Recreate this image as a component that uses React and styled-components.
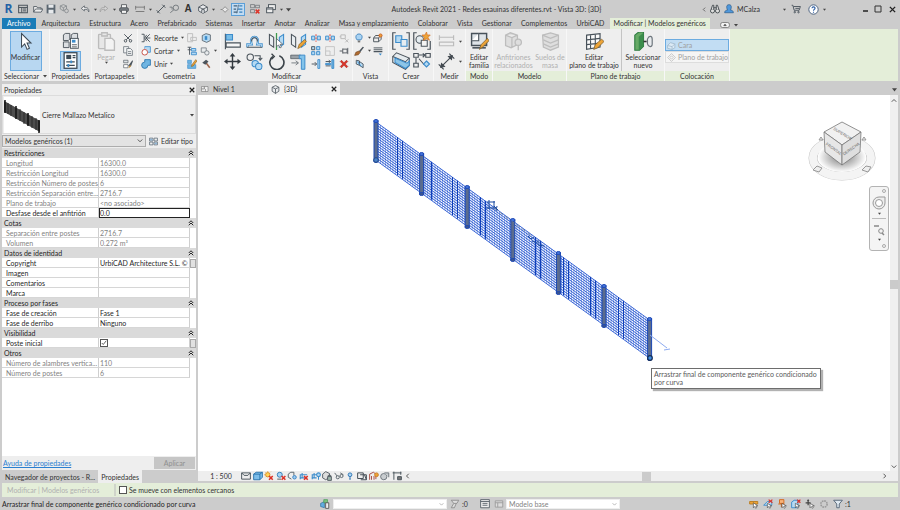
import React, { useState } from 'react';
import styled, { createGlobalStyle, css } from 'styled-components';

const c = {
  chrome: '#cccccc',
  ribbon: '#eeeeee',
  context: '#e4eed9',
  text: '#333333',
  muted: '#828282',
  disabled: '#b0b0b0',
  dark: '#4b545c',
  blue: '#3c8ccb',
  pale: '#b5daf3',
  orange: '#eda437',
  red: '#dc3328',
  green: '#3d9a4c',
};

/* ---------- icons ---------- */

const glyphs = {
  sheet: <g fill="none" stroke={c.dark} strokeWidth="1.600"><rect x="1" y="2" width="14" height="12" /><path d="M1 5.500h14M6 5.500v8.500M8 8h5M8 11h5" /></g>,
  open: <g fill="#eee" stroke={c.dark} strokeWidth="1.300"><path d="M1 13V4h5l1 2h6v3M1 13l3-5h12l-3 5z" /></g>,
  save: <g><path d="M1 1h14v14H1z" fill="#5b6670" /><path d="M4 1h8v5H4zM4 9h8v6H4z" fill="#e6e9ec" /></g>,
  sync: <g fill="none" stroke="#858a8e" strokeWidth="1.300"><path d="M7 1l5 2v5l-5 3-5-3V3zM2 3l5 3 5-3M7 6v5" /><circle cx="12" cy="11" r="3" fill="#ccc" /></g>,
  undo: <path d="M7 3L2 7l5 4V8.500c4-.5 6 .5 7 4 1-5-2-7-7-7z" fill="#f2f2f2" stroke={c.dark} strokeWidth="1.200" />,
  redo: <path d="M9 3l5 4-5 4V8.500c-4-.5-6 .5-7 4-1-5 2-7 7-7z" fill="#d5d5d5" stroke="#9a9a9a" strokeWidth="1.200" />,
  print: <g stroke="#4b4f54" strokeWidth="1.300" fill="#f4f4f4"><path d="M4 6V1h8v5" /><rect x="1" y="6" width="14" height="6" rx="2" fill="#777d82" /><path d="M4 10h8v5H4z" /></g>,
  ruler: <g stroke="#777" strokeWidth="1.500" fill="none"><path d="M1 3v6M15 3v6M1 5h14M1 12h14" /></g>,
  line: <g stroke={c.dark} strokeWidth="1.500" fill={c.dark}><path d="M2 14L14 2" /><path d="M1 10l5 5M10 1l5 5" /></g>,
  tag: <g fill="none" stroke="#6c7277" strokeWidth="1.400"><circle cx="11" cy="6" r="4.300" /><path d="M8 9l-6 5M1 5h4v4" /></g>,
  cube: <g fill="#e8eaec" stroke={c.dark} strokeWidth="1.400"><path d="M8 1l7 4v6l-7 4-7-4V5z" /><path d="M6 13V9h4v5M1 5l7 3 7-3" /></g>,
  diamond: <g fill="#e8e8e8" stroke="#777" strokeWidth="1.300"><path d="M9 3l5 5-5 5-5-5z" /><path d="M1 8h3" /></g>,
  thin: <g strokeWidth="2" stroke="#44617b"><path d="M1 3h6M1 8h4M1 13h6" /><path d="M10 3h5M8 8h7M10 13h5" stroke="#3781be" /><path d="M9 1L6 15" strokeWidth="1.200" /></g>,
  hidden: <g fill="none" stroke="#7b7f83" strokeWidth="1.400"><rect x="1" y="1" width="6" height="5" /><rect x="9" y="2" width="6" height="4" /><rect x="1" y="9" width="6" height="5" /><path d="M9 9l6 6M15 9l-6 6" stroke={c.red} strokeWidth="2.300" /></g>,
  switch: <g fill="#eee" stroke={c.dark} strokeWidth="1.500"><rect x="4" y="1" width="11" height="8" /><rect x="1" y="6" width="10" height="8" /><path d="M1 8h10" /></g>,
  binoc: <g fill="#ddd" stroke="#3d4348" strokeWidth="1.400"><circle cx="4" cy="11" r="3.300" /><circle cx="12" cy="11" r="3.300" /><path d="M2 8l2-6h2v6M14 8l-2-6h-2v6M6 6h4" /></g>,
  user: <path d="M8 1c3 0 4 2 3.600 5-.2 2-1 3-1.600 3.500 3 .5 5 1.500 5 4.500H1c0-3 2-4 5-4.500C5.400 9 4.600 8 4.400 6 4 3 5 1 8 1z" fill="#4f98dc" stroke="#24517f" />,
  cart: <g fill="none" stroke="#444e57" strokeWidth="1.400"><path d="M1 2h2l2 8h8l2-6H4M7 7h6" /><circle cx="6" cy="13" r="1.200" /><circle cx="12" cy="13" r="1.200" /></g>,
  help: <g><circle cx="8" cy="8" r="6.800" fill="#fff" stroke="#3f5878" strokeWidth="1.300" /><path d="M5.800 6.200C6 3.400 10.400 3.600 10.200 6.300 10 8 8 7.800 8 9.800M8 11.200v1.500" fill="none" stroke="#2d5fa5" strokeWidth="1.600" /></g>,
  play: <g fill="#f2f2f2" stroke="#555"><rect x="1" y="4" width="14" height="8" rx="3" /><path d="M6 9l2-2.500L10 9z" fill="#444" /></g>,

  cursor: <path d="M7 2v17l4-4 3 7 3-1.500-3-6.500h5z" fill="#fff" stroke="#3d4a55" strokeWidth="1.300" />,
  palettes: <g stroke={c.dark} strokeWidth="1.300"><path d="M2 4l3-2h6v8l-2 2H2zM13 4l3-2h6v8H13zM2 14h8v8H2z" fill="#dcdfe2" /><rect x="12" y="9" width="11" height="14" fill="#fff" /><path d="M14 11h5v4h-5z" fill={c.blue} stroke="none" /><path d="M14 18h7M14 21h7" /></g>,
  props: <g><rect x="3" y="1" width="18" height="22" fill="#fff" stroke="#3d4a55" strokeWidth="1.800" /><path d="M6 4h7v6H6z" fill="#3d4a55" /><path d="M15 5h4M15 8h4M6 14h12M6 19h12" stroke="#3d4a55" strokeWidth="1.800" /><path d="M13 12v4M9 17v4" stroke={c.blue} strokeWidth="2.500" /></g>,
  paste: <g fill="#e7e7e7" stroke="#bcbcbc" strokeWidth="1.700"><rect x="2" y="3" width="15" height="18" rx="1" /><path d="M6 1h7v4H6z" /><path d="M10 8h9l3 3v12H10z" fill="#f3f3f3" /></g>,
  cut: <g fill="none" stroke={c.dark} strokeWidth="1.500"><path d="M2 2l9 9M14 2l-9 9" /><circle cx="4" cy="12.500" r="2" /><circle cx="12" cy="12.500" r="2" /></g>,
  copy: <g fill="#f2f4f5" stroke="#6d757c" strokeWidth="1.300"><path d="M1 1h8v10H1z" /><path d="M6 4h6l3 3v8H6zM8 9h5M8 12h5" /></g>,
  match: <g><path d="M1 2h7v4H1z" fill="#dfe3e6" stroke={c.dark} /><path d="M1 9h7v5H1z" fill="#fff" stroke={c.dark} /><path d="M15 2l-6 8 1 4 3-3 3-8z" fill={c.dark} /><path d="M8 15l3-5 2 1z" fill={c.orange} /></g>,
  cope: <g fill="none" stroke={c.dark} strokeWidth="1.500"><path d="M1 2h4v12H1M14 2L8 8l6 6M8 8h7M9 3l-3 5 3 5" /></g>,
  cutGeo: <g><path d="M6 1h9v9h-4" fill={c.pale} stroke={c.blue} strokeWidth="1.300" /><path d="M6 1v4" stroke={c.blue} /><circle cx="6" cy="10" r="4.500" fill="#fff" stroke="#c44f44" strokeWidth="1.500" /></g>,
  join: <path d="M6 1h9v9h-4a5 5 0 1 1-5-5z" fill="#6fb5e2" stroke="#2a76ae" strokeWidth="1.400" />,
  wall: <g fill="#eee" stroke="#bbb" strokeWidth="1.400"><path d="M1 1h8v13H1zM6 7h9v5H6z" /></g>,
  split: <g><path d="M2 4l6-3 7 2v9l-6 3-7-3z" fill={c.pale} stroke={c.dark} strokeWidth="1.200" /><path d="M6 5h4v6H6z" fill={c.blue} /></g>,
  align2: <g stroke={c.dark} strokeWidth="1.400"><path d="M1 2h6M1 6h6M4 2v12" /><path d="M7 4h7v4H7zM7 10h8v4H7z" fill={c.pale} stroke={c.blue} /></g>,
  unjoin: <g fill="#e8ebed" stroke="#737b82" strokeWidth="1.300"><path d="M2 3h8v7H2z" /><circle cx="11" cy="11" r="3.500" /></g>,
  paint: <g><path d="M1 2h6v5H1zM1 9h13v6H1z" fill="#6fb5e2" stroke={c.blue} /><path d="M14 1l-6 8-1 3 3-1 6-8z" fill={c.orange} stroke="#8b6421" /></g>,
  hammer: <g><path d="M8 6l6 8" stroke="#a0684f" strokeWidth="2.500" /><path d="M2 6l6-5 4 3-5 5z" fill={c.dark} /></g>,

  alignBig: <g><path d="M2 1v22" stroke={c.dark} strokeWidth="1.600" /><path d="M3 2h9v8H3z" fill="#79bde6" stroke={c.blue} strokeWidth="1.500" /><path d="M3 14h20v6H3z" fill="#f5f5f5" stroke={c.dark} strokeWidth="1.600" /></g>,
  offset: <g><path d="M2 20v-4h6c-5-14 13-14 8 0h6v4" fill="none" stroke={c.blue} strokeWidth="3.200" /><path d="M2 20v-4h6c-5-14 13-14 8 0h6v4" fill="none" stroke={c.pale} strokeWidth="1.400" /><path d="M1 20h22M8 12c-1-7 9-7 8 0" fill="none" stroke={c.dark} strokeWidth="1.500" /></g>,
  mirror: <g><path d="M2 2l6 4v14l-6-4z" fill="#e8edf0" stroke={c.dark} strokeWidth="1.500" /><path d="M22 2l-6 4v14l6-4z" fill={c.pale} stroke={c.blue} strokeWidth="1.500" /><path d="M12 0v24" stroke={c.green} strokeWidth="1.800" /><path d="M12 8v11l3-2 2 4 2-1-2-4h4z" fill="#fff" stroke={c.dark} /></g>,
  mirrorDraw: <g><path d="M2 2l6 4v14l-6-4z" fill="#e8edf0" stroke={c.dark} strokeWidth="1.500" /><path d="M22 2l-6 4v14l6-4z" fill={c.pale} stroke={c.blue} strokeWidth="1.500" /><path d="M11 22l2-6 8-7 2 3-8 8z" fill={c.orange} stroke="#80612c" /></g>,
  move: <path d="M12 0l4 5h-3v6h6V8l5 4-5 4v-3h-6v6h3l-4 5-4-5h3v-6H5v3l-5-4 5-4v3h6V5H8z" fill="#343b41" />,
  copyBig: <g strokeWidth="1.500"><circle cx="6" cy="6" r="4.500" fill="#eee" stroke={c.dark} /><path d="M12 4h8v5M18 7l2 3 3-3" fill="none" stroke={c.dark} /><circle cx="13" cy="15" r="4.500" fill={c.pale} stroke={c.blue} /><circle cx="18" cy="19" r="4.500" fill={c.pale} stroke={c.blue} /></g>,
  rotate: <g fill="none" stroke="#3b4349" strokeWidth="2.300"><path d="M7 5a10 10 0 1 0 9-1" /><path d="M5 1l4 4-4 4" strokeWidth="1.800" /></g>,
  trim: <g><path d="M1 3h14v5H1z" fill="#9aa1a7" stroke={c.dark} /><path d="M13 3h8v20h-5V8h-3z" fill="#83c3ea" stroke={c.blue} strokeWidth="1.400" /><path d="M2 14h9M8 11l4 3-4 3" stroke={c.dark} fill="none" /></g>,
  splitEl: <g strokeWidth="1.500"><path d="M1 5h5v6H1zM10 5h5v6h-5z" fill={c.pale} stroke={c.blue} /><path d="M8 2v12" stroke={c.red} strokeDasharray="3 2" /></g>,
  unpin: <g fill="none" stroke="#b9b9b9" strokeWidth="1.500"><path d="M3 3h7v6H3zM1 6h2M10 10l5 5M15 10l-5 5" /></g>,
  array: <g fill={c.pale} stroke={c.blue} strokeWidth="1.500"><path d="M1 1h5v5H1z" stroke={c.dark} /><path d="M9 1h5v5H9zM1 9h5v5H1zM9 9h5v5H9z" /></g>,
  scale: <g fill="#eee" stroke="#c4c4c4" strokeWidth="1.500"><path d="M1 1h14v14H1z" /><path d="M1 8h7v7H1z" /></g>,
  pin: <g fill="none" stroke="#555c62" strokeWidth="1.500"><path d="M1 8h5M6 4v8M6 5h7v6H6M14 3v10" /></g>,
  trimOne: <g stroke={c.dark} fill="none" strokeWidth="1.500"><path d="M1 8h8M6 5l3 3-3 3" /><path d="M11 1h3v14h-3z" fill={c.pale} stroke={c.blue} /></g>,
  trimMulti: <g stroke={c.dark} fill="none" strokeWidth="1.500"><path d="M1 4h8M1 11h8M6 2l3 2-3 2" /><path d="M11 1h3v14h-3zM1 7h8v2H1z" fill="#6fb5e2" stroke={c.blue} /></g>,
  delete: <path d="M2 4l2-2 4 4 4-4 2 2-4 4 4 4-2 2-4-4-4 4-2-2 4-4z" fill={c.red} stroke="#a92820" />,
  bulb: <g><path d="M5 11C2 8 2 2 8 1.500 14 2 14 8 11 11z" fill="#a9d3f3" stroke="#3b7fb9" strokeWidth="1.400" /><path d="M6 12h4v3H6z" fill="#777" /></g>,
  brush: <g><path d="M14 1l-6 7 2 2 6-8z" fill={c.dark} /><path d="M8 8L3 10l-2 5 6-1 3-4z" fill="#b06b31" stroke="#744821" /></g>,
  override: <g fill="none" stroke={c.dark} strokeWidth="1.500"><path d="M1 8l3-4h8l-3 4zM1 8v6h8V8M9 14l4-4V5" /><circle cx="12" cy="4" r="2.500" fill={c.orange} stroke="#cc6127" /></g>,
  linework: <g stroke="#4b545c"><path d="M1 3h14M1 6h14" strokeWidth="1.500" /><path d="M1 9h14" strokeWidth="2" /><path d="M9 12h5l-2 3z" fill={c.blue} stroke="none" /></g>,
  section: <g fill={c.pale} stroke={c.dark} strokeWidth="1.400"><path d="M2 2l5 1v7L2 8zM7 4l6 4v6l-6-4z" /><path d="M4 4l6 8" stroke={c.blue} /></g>,
  group: <g><path d="M5 1H1v22h4M19 1h4v22h-4" fill="none" stroke={c.dark} strokeWidth="1.600" /><path d="M5 5h8v9H5z" fill={c.pale} stroke={c.blue} strokeWidth="1.500" /><path d="M12 10h8v9h-8z" fill="#e6edf1" stroke={c.blue} strokeWidth="1.500" /></g>,
  similar: <g><path d="M5 1H1v22h4M19 23h4V12" fill="none" stroke={c.dark} strokeWidth="1.600" /><circle cx="9" cy="10" r="5" fill="#e6edf1" stroke={c.dark} strokeWidth="1.400" /><path d="M11 11h8v8h-8z" fill="#f4f4f4" stroke={c.dark} strokeWidth="1.400" /><path d="M18 0l1 4 4 0-3 3 2 4-4-2-4 2 1-4-3-3 4 0z" fill={c.orange} stroke="#d8772b" /></g>,
  assembly: <g strokeWidth="1.400" stroke={c.dark}><path d="M1 6l5-5 17 7v10l-5 5L1 14z" fill="#e5eaed" /><path d="M1 6l17 7v10M18 13l5-5" fill="none" /><path d="M4 8l16 7 3-3v6l-5 4L4 14z" fill="#8ec5e7" stroke={c.blue} /></g>,
  parts: <g fill="none" stroke={c.dark} strokeWidth="1.500"><path d="M1 2h6v5H1zM17 2h6v5h-6zM1 15h6v5H1z" /><path d="M8 4h8M4 8v7M8 9l7 8M13 2l3 2-3 3" /><path d="M18 12l4 4-4 4-4-4z" fill={c.pale} stroke={c.blue} /></g>,
  dimGrey: <g fill="none" stroke="#bcbcbc" strokeWidth="1.700"><path d="M2 3v7M22 3v7M2 6h20M2 13h20v5H2z" /></g>,
  measure: <g stroke="#424950" strokeWidth="1.600" fill="#424950"><path d="M4 20L20 4" /><path d="M1 16l7 7M16 1l7 7" /><path d="M4 20l1-5 4 4zM20 4l-1 5-4-4z" /></g>,
  family: <g><path d="M2 2h19v15H2z" fill="#dfe4e8" stroke="#48525a" strokeWidth="1.800" /><path d="M2 11h9V2" fill="#fff" stroke="#48525a" strokeWidth="1.400" /><path d="M3 20h17" stroke="#48525a" strokeWidth="2" /><path d="M12 22l2-6 8-8 2 3-8 8z" fill={c.orange} stroke="#80612c" /></g>,
  hosts: <g fill="#dedede" stroke="#bdbdbd" strokeWidth="1.600"><path d="M2 4l6-3 9 3v12l-8 4-7-3zM2 4l8 3 7-3M10 7v12" /><circle cx="18" cy="13" r="4" /><path d="M18 17v6" /></g>,
  floors: <g fill="#dedede" stroke="#bdbdbd" strokeWidth="1.600"><path d="M2 4l10-3 10 3v15l-10 4-9-4z" /><path d="M2 4l10 4 10-4M3 10l9 4 10-4M3 15l9 4 10-4" fill="none" /></g>,
  plane: <g><path d="M2 4l17-2v17L2 22z" fill="#fafafa" stroke="#48525a" strokeWidth="1.500" /><path d="M7 4v17M13 3v17M2 10l17-2M2 16l17-2" stroke="#48525a" strokeWidth="1.400" /><path d="M11 22l2-6 8-7 3 3-8 8z" fill={c.orange} stroke="#80612c" /></g>,
  pick: <g><path d="M1 4l5-4h6v18l-5 5H1z" fill="#66aa66" stroke="#2f7c42" strokeWidth="1.400" /><path d="M6 6L12 1v17l-6 5z" fill="#3c8d4c" /><path d="M12 12h4" stroke="#333" strokeWidth="2" /><path d="M17 9c2-5 6-4 6 0v6c0 5-5 4-6 0z" fill="#e8ebed" stroke="#6d757c" strokeWidth="1.500" /></g>,
  face: <g fill="#dceaf5" stroke="#9fb7cb" strokeWidth="1.400"><path d="M1 8l5-5 8 2v7l-5 3-8-2z" /><path d="M1 8l8 2 5-5M9 10v5" /></g>,
  workplane: <g fill="none" stroke="#c2c2c2" strokeWidth="1.500"><path d="M8 1l7 7-7 7-7-7z" /><path d="M8 5l3 3-3 3-3-3z" /></g>,
  typeEdit: <g fill="none" stroke="#5e6c79" strokeWidth="1.400"><path d="M1 2h6v5H1zM1 9h6v5H1zM9 2h6v5H9zM9 9h6v5H9z" /><path d="M2 3h4v3H2zM10 10h4v3h-4z" fill="#8cb4d6" stroke="none" /></g>,
  plan: <g fill="#eee" stroke="#777" strokeWidth="1.200"><path d="M1 3h13v10H1zM1 8h6V3M9 13V8" /></g>,
  view3d: <g fill="#e8eaec" stroke={c.dark} strokeWidth="1.400"><path d="M8 1l6 3v7l-6 4-6-4V4z" /><path d="M2 4l6 3 6-3M8 7v8" /></g>,

  detail: <g fill="none" stroke="#48525a" strokeWidth="1.500"><path d="M1 3h14v10H1zM1 3l4 4h6l4-4" /></g>,
  visual: <path d="M1 5l4-3h10v8l-4 4H1zM1 5h10v9M11 5l4-3" fill="#7cbde9" stroke="#236ea8" strokeWidth="1.400" />,
  sun: <g><circle cx="6" cy="6" r="3.500" fill="#ffd45c" stroke="#dc8f22" strokeWidth="1.500" /><path d="M6 0v2M0 6h2M2 2l1 1M10 2l1-1M2 10l1-1" stroke="#dc8f22" /><path d="M8 8l6 6M14 8l-6 6" stroke={c.red} strokeWidth="2.500" /></g>,
  shadow: <g><circle cx="6" cy="6" r="4" fill="#a9d3f3" stroke="#317fb9" strokeWidth="1.500" /><path d="M2 13h6" stroke="#555" strokeWidth="1.500" /><path d="M9 8l6 6M15 8l-6 6" stroke={c.red} strokeWidth="2.500" /></g>,
  render: <g fill="none" stroke="#59636b" strokeWidth="1.500"><path d="M2 5l4-3h5v5M2 5v5l5 3" /><circle cx="12" cy="10" r="2.800" fill="#9ccaf0" stroke="#3a83c2" /></g>,
  crop: <g strokeWidth="1.700" fill="none"><path d="M2 13V6h11M5 3v8M1 11h9" stroke={c.blue} /><path d="M8 8l6 6M14 8l-6 6" stroke={c.red} strokeWidth="2.500" /></g>,
  cropShow: <g strokeWidth="1.700" fill="none" stroke={c.blue}><path d="M2 13V6h8M5 3v8M1 11h8" /><circle cx="12" cy="6" r="3" fill="#b5daf3" /><path d="M12 9v5" /></g>,
  lock: <g fill="#ddd" stroke="#4b545c" strokeWidth="1.400"><path d="M1 5l5-4 6 3v6l-6 4-5-3z" /><path d="M9 9h6v6H9zM10 9V7h4v2" fill="#9fb7ac" /></g>,
  glasses: <g fill="none" stroke="#59636b" strokeWidth="1.500"><path d="M1 3l4 5M10 3l5 3" /><circle cx="6" cy="10" r="2.500" /><circle cx="12" cy="8" r="2.500" /></g>,
  bulbSm: <g><circle cx="8" cy="6" r="3" fill="#a9d3f3" stroke="#2e74b3" strokeWidth="1.500" /><path d="M8 10v4" stroke="#2e74b3" strokeWidth="2" /></g>,
  temp: <g fill="none" stroke="#48525a" strokeWidth="1.600"><path d="M1 3h9v9H1zM5 6h10v8H6M12 6l3 8" /></g>,
  analytic: <g fill="none" stroke="#59636b" strokeWidth="1.500"><path d="M1 14V5l6-3 4 3v8M4 8v6M8 8v6" stroke="#a7483d" /><circle cx="12" cy="6" r="3" fill={c.orange} stroke="#cc7d27" /></g>,
  displace: <g fill="#c9cdd0" stroke="#6d757c" strokeWidth="1.500"><circle cx="6" cy="9" r="5" /><path d="M7 3h7v7" /></g>,
  constr: <g fill="none" stroke="#48525a" strokeWidth="1.500"><path d="M1 3h14M3 1v13M14 1v5" /><path d="M9 9h6v5H9z" fill="#777" /></g>,

  worksets: <g><path d="M1 7l6-3v10l-6-2z" fill="#63aee0" stroke="#25669a" /><path d="M6 1h6v5H6z" fill="#7dc081" stroke={c.green} /><path d="M9 6h5v9H9z" fill="#eee" stroke="#555" strokeWidth="1.400" /></g>,
  filterOff: <g fill="#ddd" stroke="#8b8b8b" strokeWidth="1.400"><path d="M2 2h12l-3 5H6zM6 7l-4 7h5l3-7" /></g>,
  options: <g fill="#eee" stroke="#555e66" strokeWidth="1.400"><path d="M1 1h14v13H1zM1 4h14M4 7h8M4 10h8" /></g>,
  optionsOff: <g fill="#ddd" stroke="#999" strokeWidth="1.400"><path d="M2 3h12v10H2zM2 6h12M6 6v7" /></g>,
  selLink: <g><path d="M1 4h13v4H1z" fill={c.orange} stroke="#b87a1e" strokeWidth="1.400" /><path d="M7 6v8l2-2 2 3 1-1-1-3h3z" fill="#fff" stroke="#444" /></g>,
  selUnder: <g><path d="M1 10l6-6h7v6z" fill={c.pale} stroke={c.blue} strokeWidth="1.400" /><path d="M9 1l6 5M15 1L9 6" stroke={c.red} strokeWidth="2" /><path d="M7 7v7l2-2 2 3 1-1-1-3h3z" fill="#fff" stroke="#444" /></g>,
  selPin: <g><path d="M4 1h7v6H4zM2 8h10M7 8v5" fill="#f7b37a" stroke="#d2691e" strokeWidth="1.500" /><path d="M8 7v7l2-2 2 3 1-1-1-3h3z" fill="#fff" stroke="#444" /></g>,
  selFace: <g><path d="M1 5l4-3h6v12H1z" fill={c.pale} stroke={c.blue} strokeWidth="1.500" /><path d="M10 1l5 5M15 1l-5 5" stroke={c.red} strokeWidth="2" /><path d="M7 7v7l2-2 2 3 1-1-1-3h3z" fill="#fff" stroke="#444" /></g>,
  selDrag: <g><path d="M5 0l2 3H6v2h3v2H6v3H4V7H1V5h3V3H3z" fill="#444" /><path d="M8 7v7l2-2 2 3 1-1-1-3h3z" fill="#fff" stroke="#444" /></g>,
  gear: <circle cx="8" cy="8" r="5" fill="none" stroke="#999" strokeWidth="2.500" strokeDasharray="2.600 1.300" />,
  funnel: <path d="M1 2h14l-5 6v6H6V8z" fill="#dfe9f1" stroke="#566879" strokeWidth="1.500" />,
};

const big = ['cursor', 'palettes', 'props', 'paste', 'alignBig', 'offset', 'mirror', 'mirrorDraw', 'move', 'copyBig', 'rotate', 'trim', 'group', 'similar', 'assembly', 'parts', 'dimGrey', 'measure', 'family', 'hosts', 'floors', 'plane', 'pick'];

const Svg = styled.svg`
  display: block;
  flex: none;
`;

const Icon = ({ name, size = 10 }) => {
  const box = big.includes(name) ? 24 : 16;
  return (
    <Svg width={size} height={size} viewBox={`0 0 ${box} ${box}`} aria-hidden="true">
      {glyphs[name]}
    </Svg>
  );
};

const Caret = ({ size = 4 }) => (
  <Svg width={size} height={size} viewBox="0 0 8 8" aria-hidden="true">
    <path d="M0 2h8L4 7z" fill="#444" />
  </Svg>
);

const Chevron = ({ dir = 'down', color = '#555', size = 6 }) => {
  const d = { down: 'M1 2l3 3 3-3', up: 'M1 5l3-3 3 3', left: 'M5 1L2 4l3 3', right: 'M2 1l3 3-3 3', double: 'M1 4l3-3 3 3M1 7l3-3 3 3' }[dir];
  return (
    <Svg width={size} height={size} viewBox="0 0 8 8" aria-hidden="true">
      <path d={d} fill="none" stroke={color} strokeWidth="1.300" />
    </Svg>
  );
};

const Cross = ({ size = 6 }) => (
  <Svg width={size} height={size} viewBox="0 0 8 8" aria-hidden="true">
    <path d="M1 1l6 6M7 1L1 7" stroke="#222" strokeWidth="1.600" />
  </Svg>
);

/* ---------- shared ---------- */

const GlobalStyle = createGlobalStyle`
  * { box-sizing: border-box; }
  body {
    margin: 0;
    color: ${c.text};
    background: ${c.chrome};
    font: 7px/8px Lato, "Open Sans", sans-serif;
  }
  button, input, select {
    margin: 0;
    padding: 0;
    border: 0;
    border-radius: 0;
    color: inherit;
    background: none;
    font: inherit;
  }
`;

const Page = styled.div`
  display: flex;
  flex-direction: column;
  min-height: 100vh;
  overflow: hidden;
`;

const Row = styled.div`
  display: flex;
  align-items: center;
  gap: ${(p) => p.$gap || 0}px;
`;

const Spacer = styled.div`
  flex: 1;
`;

/* ---------- title bar ---------- */

const TitleBar = styled.header`
  display: flex;
  align-items: center;
  height: 18px;
  padding: 0 2px;
`;

const ToolButton = styled.button`
  display: flex;
  align-items: center;
  justify-content: ${(p) => (p.$end ? 'flex-end' : 'center')};
  gap: 4px;
  width: ${(p) => p.$w || 14}px;
  height: 13px;
  ${(p) => p.$on && css`
    background: #c3dcf2;
    outline: 1px solid #5b9fd8;
    outline-offset: -1px;
  `}
`;

const Logo = styled.span`
  width: 13px;
  color: #2462a6;
  font: bold 12px/12px "Open Sans", sans-serif;
  text-align: center;
`;

const Letter = styled.span`
  font: bold 10px/12px "Liberation Sans", sans-serif;
`;

const WindowTitle = styled.h1`
  flex: 1;
  margin: 0;
  font-size: 7px;
  font-weight: 400;
  text-align: center;
  white-space: nowrap;
`;

const User = styled.button`
  display: flex;
  align-items: center;
  gap: 3px;
  width: 62px;
  margin-left: 2px;
  svg:last-child { margin-left: auto; }
`;

/* ---------- ribbon ---------- */

const Tabs = styled.nav`
  display: flex;
  align-items: stretch;
  height: 11px;
  padding-left: 2px;
`;

const TabList = styled.div`
  display: flex;
  flex: 0 0 563px;
  justify-content: space-between;
  margin: 0 5px 0 6px;
`;

const Tab = styled.button`
  line-height: 11px;
  white-space: nowrap;
  ${(p) => p.$file && css`
    padding: 0 5px;
    background: #1b7cb7;
    color: #fff;
  `}
  ${(p) => p.$context && css`
    padding: 0 4px;
    background: ${c.context};
  `}
`;

const Ribbon = styled.div`
  display: flex;
  gap: 1px;
  height: 54px;
  margin: 0 2px;
  padding-bottom: 2px;
  background: linear-gradient(#f7f7f7 0 52px, ${c.chrome} 52px);
`;

const Panel = styled.section`
  display: flex;
  flex-direction: column;
  flex: 0 0 ${(p) => p.$w}px;
  min-width: 0;
  background: ${c.ribbon};
`;

const PanelBody = styled.div`
  display: flex;
  height: 42px;
  align-items: stretch;
  justify-content: ${(p) => (p.$start ? 'flex-start' : 'center')};
  gap: ${(p) => p.$gap || 0}px;
  padding: 2px 0 0;
`;

const PanelName = styled.h2`
  display: flex;
  align-items: center;
  justify-content: center;
  gap: 4px;
  margin: 0;
  height: 10px;
  font-size: 7px;
  font-weight: 400;
  white-space: nowrap;
  background: ${(p) => (p.$context ? c.context : 'none')};
`;

const BigButton = styled.button`
  display: flex;
  flex-direction: column;
  align-items: center;
  width: ${(p) => p.$w || 32}px;
  padding-top: 1px;
  white-space: nowrap;
  color: ${(p) => (p.$off ? c.disabled : c.text)};
  ${(p) => p.$on && css`
    background: #b8d7f1;
    outline: 1px solid #6cabe0;
    outline-offset: -1px;
  `}
  svg { margin-bottom: 2px; }
`;

const Stack = styled.div`
  display: flex;
  flex-direction: column;
`;

const SmallGrid = styled.div`
  display: grid;
  grid-template-columns: repeat(${(p) => p.$cols || 1}, ${(p) => p.$w || 14}px);
  grid-template-rows: repeat(3, 13px);
  align-items: center;
`;

const BigGrid = styled.div`
  display: grid;
  grid-template-columns: repeat(${(p) => p.$cols}, ${(p) => p.$w || 22}px);
  grid-template-rows: repeat(2, 20px);
  align-items: center;
  justify-items: center;
`;

const TextTool = styled.button`
  display: flex;
  align-items: center;
  gap: 3px;
  white-space: nowrap;
`;

const Divider = styled.div`
  width: 1px;
  margin-top: -2px;
  background: #c4c4c4;
`;

const PlacementList = styled.div`
  display: flex;
  flex-direction: column;
  padding-top: 8px;
`;

const Placement = styled.button`
  display: flex;
  align-items: center;
  gap: 2px;
  width: 64px;
  height: 12px;
  padding: 0 1px;
  color: #a0a0a0;
  white-space: nowrap;
  background: ${(p) => (p.$on ? '#c2ddf3' : '#f5f5f5')};
  border: 1px solid ${(p) => (p.$on ? '#6cabe0' : '#dddddd')};
`;

const ContextFill = styled.div`
  flex: 1;
  background: ${c.context};
`;

/* ---------- properties palette ---------- */

const Workspace = styled.main`
  display: flex;
  flex: 1;
`;

const Palette = styled.aside`
  display: flex;
  flex-direction: column;
  flex: 0 0 198px;
  padding: 1px 2px 0;
  background: ${c.chrome};
`;

const PaletteBox = styled.div`
  display: flex;
  flex-direction: column;
  flex: 1;
  background: ${c.ribbon};
`;

const PaletteHead = styled(Row)`
  justify-content: space-between;
  height: 11px;
  padding: 0 1px 0 2px;
`;

const TypePicker = styled.button`
  display: flex;
  align-items: center;
  gap: 2px;
  width: 100%;
  height: 39px;
  padding: 0 1px;
  border: 1px solid #dcdcdc;
  text-align: left;
`;

const Thumb = styled.svg`
  width: 36px;
  height: 36px;
  background: #fff;
`;

const FilterRow = styled(Row)`
  height: 14px;
  gap: 3px;
`;

const SelectBox = styled.div`
  position: relative;
  flex: 0 0 ${(p) => p.$w}px;
  height: ${(p) => p.$h || 12}px;
  border: 1px solid ${(p) => (p.$plain ? '#eeeeee' : '#adadad')};
  background: ${(p) => (p.$plain ? '#fff' : '#e3e3e3')};
  color: ${(p) => (p.$plain ? c.muted : c.text)};
  select {
    display: block;
    width: 100%;
    height: 100%;
    padding-left: 2px;
    appearance: none;
    line-height: 8px;
  }
  svg {
    position: absolute;
    right: 2px;
    top: 2px;
    pointer-events: none;
  }
`;

const TableArea = styled.div`
  flex: 1;
  background: #fff;
`;

const Table = styled.table`
  width: 100%;
  table-layout: fixed;
  border-collapse: separate;
  border-spacing: 0;
`;

const Col = styled.col`
  width: ${(p) => p.$w || 'auto'};
`;

const Group = styled.th`
  height: 10px;
  padding: 0 2px;
  text-align: left;
  font-weight: 400;
  line-height: 8px;
  background: #dadada;
  color: #1f1f1f;
  div { justify-content: space-between; }
  button { display: flex; }
`;

const Cell = styled.td`
  height: 10px;
  padding: 0 0 0 ${(p) => (p.$name ? 4 : 1)}px;
  white-space: nowrap;
  line-height: 8px;
  border-right: 1px solid #cfcfcf;
  border-bottom: 1px solid #d6d6d6;
  color: ${(p) => (p.$muted ? c.muted : '#1f1f1f')};
  ${(p) => p.$edit && css`
    border: 1px solid #222;
    padding: 0;
  `}
  input[type='text'] {
    display: block;
    width: 100%;
    height: 8px;
    outline: 0;
  }
  input[type='checkbox'] {
    display: block;
  }
`;

const MoreCell = styled.td`
  padding: 0;
`;

const MoreButton = styled.button`
  display: block;
  width: 6px;
  height: 9px;
  background: #e1e1e1;
  border: 1px solid #a9a9a9;
`;

const Tick = styled.input`
  appearance: none;
  width: 8px;
  height: 8px;
  border: 1px solid #555;
  background: #fff;
  &:checked {
    background: #fff url("data:image/svg+xml,%3Csvg xmlns='http://www.w3.org/2000/svg' viewBox='0 0 8 8'%3E%3Cpath d='M1 4l2 2 4-5' fill='none' stroke='%23333'/%3E%3C/svg%3E");
  }
`;

const HelpRow = styled(Row)`
  justify-content: space-between;
  height: 14px;
  padding: 0 1px;
  a { color: #2a7fd0; }
`;

const Apply = styled.button`
  width: 41px;
  height: 12px;
  background: #c6c6c6;
  color: #8f8f8f;
`;

const BottomTabs = styled.div`
  display: flex;
  height: 13px;
`;

const BottomTab = styled.button`
  padding: 0 3px;
  white-space: nowrap;
  background: ${(p) => (p.$on ? c.ribbon : 'none')};
`;

/* ---------- view area ---------- */

const ViewArea = styled.div`
  display: flex;
  flex-direction: column;
  flex: 1;
  min-width: 0;
  padding-right: 2px;
`;

const ViewTabs = styled.div`
  display: flex;
  align-items: center;
  height: 12px;
  padding-right: 1px;
`;

const ViewTab = styled.div`
  display: flex;
  align-items: center;
  gap: 4px;
  width: ${(p) => p.$w}px;
  height: 12px;
  padding: 0 3px;
  background: ${(p) => (p.$on ? '#f2f2f2' : 'none')};
`;

const CanvasRow = styled.div`
  display: flex;
  flex: 1;
`;

const Canvas = styled.div`
  position: relative;
  flex: 1;
  background: #fff;
  overflow: hidden;
`;

const Model = styled.svg`
  position: absolute;
  left: 0;
  top: 0;
`;

const Cube = styled.svg`
  position: absolute;
  right: 13px;
  top: 24px;
`;

const NavBar = styled.div`
  position: absolute;
  right: 1px;
  top: 91px;
  display: flex;
  flex-direction: column;
  align-items: center;
  justify-content: space-between;
  width: 20px;
  height: 65px;
  padding: 2px 0;
  border: 1px solid #b3b3b3;
  border-radius: 3px;
  background: #f4f4f4;
`;

const NavDot = styled.button`
  align-self: flex-end;
  width: 4px;
  height: 4px;
  margin-right: 2px;
  border: 1px solid #aaa;
  border-radius: 2px;
`;

const NavLine = styled.div`
  width: 14px;
  height: 1px;
  background: #bbb;
`;

const Tooltip = styled.div`
  position: absolute;
  left: 453px;
  top: 273px;
  width: 170px;
  padding: 1px 2px 2px;
  border: 1px solid #6d6d6d;
  background: #fff;
  box-shadow: 2px 2px 1px rgba(0, 0, 0, 0.3);
  color: #5a5a5a;
`;

const VScroll = styled.div`
  display: flex;
  flex-direction: column;
  align-items: center;
  justify-content: space-between;
  width: 8px;
  padding: 3px 0 1px;
  background: #f0f0f0;
`;

const Thumbnail = styled.div`
  width: ${(p) => p.$w}px;
  height: 9px;
  background: #cbcbcb;
`;

const ViewBar = styled.div`
  display: flex;
  align-items: center;
  height: 10px;
  margin-bottom: 2px;
  background: #eeeeee;
`;

const ScaleButton = styled.button`
  width: 43px;
  padding-left: 3px;
  text-align: center;
`;

const ViewTools = styled.div`
  display: flex;
  flex: 0 0 161px;
  justify-content: space-between;
  margin-right: 3px;
  button { display: flex; }
`;

const HScroll = styled.div`
  display: flex;
  flex: 1;
  align-items: center;
  justify-content: space-between;
  padding-right: 10px;
`;

/* ---------- bottom bars ---------- */

const OptionsBar = styled.div`
  display: flex;
  align-items: center;
  height: 14px;
  margin: 0 2px;
  padding-left: 5px;
  background: ${c.context};
`;

const OptionsName = styled.span`
  width: 107px;
  color: ${c.disabled};
`;

const Grip = styled.div`
  width: 2px;
  height: 12px;
  margin-right: 3px;
  background: #cfd4ca;
`;

const StatusBar = styled.footer`
  display: flex;
  align-items: center;
  height: 13px;
  padding: 0 2px;
`;

const StatusText = styled.span`
  flex: 0 1 315px;
  color: #1f1f1f;
`;

const Count = styled.span`
  width: ${(p) => p.$w}px;
`;

/* ---------- data ---------- */

const quickTools = [
  ['sheet', 15], ['open', 15], ['save', 12], ['sync', 21, true], ['undo', 20, true], ['redo', 19, true],
  ['print', 14], ['ruler', 24, true], ['line', 12], ['tag', 14],
];

const ribbonTabs = ['Arquitectura', 'Estructura', 'Acero', 'Prefabricado', 'Sistemas', 'Insertar', 'Anotar', 'Analizar', 'Masa y emplazamiento', 'Colaborar', 'Vista', 'Gestionar', 'Complementos', 'UrbiCAD'];

const properties = [
  { group: 'Restricciones', rows: [
    ['Longitud', '16300.0', true],
    ['Restricción Longitud', '16300.0', true],
    ['Restricción Número de postes', '6', true],
    ['Restricción Separación entre...', '2716.7', true],
    ['Plano de trabajo', '<no asociado>', true],
    ['Desfase desde el anfitrión', '0.0'],
  ] },
  { group: 'Cotas', rows: [['Separación entre postes', '2716.7', true], ['Volumen', '0.272 m³', true]] },
  { group: 'Datos de identidad', rows: [['Copyright', 'UrbiCAD Architecture S.L. ©'], ['Imagen', ''], ['Comentarios', ''], ['Marca', '']] },
  { group: 'Proceso por fases', rows: [['Fase de creación', 'Fase 1'], ['Fase de derribo', 'Ninguno']] },
  { group: 'Visibilidad', rows: [['Poste inicial', 'check']] },
  { group: 'Otros', rows: [['Número de alambres vertica...', '110', true], ['Número de postes', '6', true]] },
];

const viewTools = ['detail', 'visual', 'sun', 'shadow', 'render', 'crop', 'cropShow', 'lock', 'glasses', 'bulbSm', 'temp', 'analytic', 'displace', 'constr'];

/* ---------- fence ---------- */

const slope = 33 / 45.6;
const startX = 178;
const endX = 452;
const topY = (x) => 27 + (x - startX) * slope;
const wires = Array.from({ length: 110 }, (_, i) => startX + 2 + i * 2.48);
const strands = Array.from({ length: 16 }, (_, i) => i * 2.55);
const posts = Array.from({ length: 7 }, (_, i) => startX + i * 45.6);
const heavy = [199, 204, 233, 254, 259, 282, 287, 337, 342, 365, 370, 392, 397, 420, 425];

const Fence = () => (
  <Model width="692" height="376" viewBox="0 0 692 376" role="img" aria-label="Cierre Mallazo Metalico">
    <g stroke="#2455d0">
      {wires.map((x) => <path key={x} d={`M${x} ${topY(x)}v38`} strokeWidth="0.700" strokeOpacity="0.700" />)}
      {strands.map((s) => <path key={s} d={`M${startX} ${topY(startX) + s}L${endX} ${topY(endX) + s}`} strokeWidth="0.900" />)}
    </g>
    <g stroke="#0f3fb8">
      {heavy.map((x) => <path key={x} d={`M${x + 0.5} ${topY(x)}v38`} />)}
    </g>
    {posts.map((x) => (
      <g key={x}>
        <rect x={x - 2} y={topY(x) - 1} width="4" height="40" fill="#5b6c8e" stroke="#1b48b4" />
        <ellipse cx={x} cy={topY(x) - 1} rx="2.200" ry="1.500" fill="#4373da" stroke="#1c47b5" />
        <ellipse cx={x} cy={topY(x) + 39} rx="2.200" ry="1.500" fill="#3d568c" stroke="#1c47b5" />
      </g>
    ))}
    <g stroke="#1a4aa0" fill="none">
      <path d="M289 107h8M288 113h8M291 105v9M296 106v8M296 111l4 4M299 111l-1 5" />
      <path d="M330 141l3 3 3-2M334 146l5 2M340 145v5l6 1" />
    </g>
    <path d="M296 113l38 28" stroke="#6b7d8f" strokeDasharray="4 3" strokeWidth="0.700" />
    <path d="M452 240l17 13M466 255l6-1" stroke="#8dabf0" fill="none" />
    <circle cx="178" cy="65" r="2.300" fill="#4b83c9" stroke="#234a86" />
    <circle cx="452" cy="263" r="2.300" fill="#3f8fe6" stroke="#142d55" strokeWidth="1.200" />
  </Model>
);

const ViewCube = () => (
  <Cube width="70" height="66" viewBox="0 0 70 66" role="img" aria-label="ViewCube">
    <defs>
      <radialGradient id="cubeShade">
        <stop offset="0.300" stopColor="#a0a0a0" />
        <stop offset="1" stopColor="#ffffff" />
      </radialGradient>
    </defs>
    <ellipse cx="35" cy="39" rx="29" ry="18" fill="none" stroke="#c4c4c4" strokeWidth="9" />
    <ellipse cx="35" cy="39" rx="29" ry="18" fill="none" stroke="#f4f4f4" strokeWidth="8" />
    <ellipse cx="35" cy="38" rx="24" ry="15" fill="url(#cubeShade)" />
    <g stroke="#777" strokeWidth="0.800" strokeLinejoin="round">
      <path d="M35 3l19 10-19 13-18-13z" fill="#f1f1f1" />
      <path d="M17 13l18 13v20L18 33z" fill="#e7e7e7" />
      <path d="M54 13L35 26v20l18-13z" fill="#dedede" />
    </g>
    <g fill="#666" fontFamily="Liberation Sans, sans-serif" fontSize="4" textAnchor="middle">
      <text transform="translate(35 16) rotate(31)">SUPERIOR</text>
      <text transform="translate(26 31) rotate(36)">FRONTAL</text>
      <text transform="translate(45 31) rotate(-35)">DERECHA</text>
    </g>
    <g fill="#eee" stroke="#999">
      <path d="M6 51l4-4 5 2-3 4zM55 51l4-4 5 1-3 5zM12 21l2-3 2 3zM55 21l2-3 2 3z" />
    </g>
  </Cube>
);

/* ---------- sections ---------- */

const Header = () => (
  <TitleBar>
    <Logo>R</Logo>
    {quickTools.map(([name, w, menu]) => (
      <ToolButton key={name} $w={w} aria-label={name}>
        <Icon name={name} />
        {menu && <Caret size={3} />}
      </ToolButton>
    ))}
    <ToolButton aria-label="texto"><Letter>A</Letter></ToolButton>
    <ToolButton $w={23} aria-label="vista 3D"><Icon name="cube" /><Caret size={3} /></ToolButton>
    <ToolButton $w={13} aria-label="sección"><Icon name="diamond" size={9} /></ToolButton>
    <ToolButton $on aria-label="líneas finas"><Icon name="thin" /></ToolButton>
    <ToolButton $w={20} aria-label="cerrar ocultas"><Icon name="hidden" /></ToolButton>
    <ToolButton $w={18} aria-label="cambiar ventana"><Icon name="switch" /><Caret size={3} /></ToolButton>
    <ToolButton $w={10} aria-label="personalizar"><Caret size={5} /></ToolButton>
    <WindowTitle>Autodesk Revit 2021 - Redes esauinas diferentes.rvt - Vista 3D: {'{3D}'}</WindowTitle>
    <ToolButton $w={8} aria-label="ocultar"><Chevron dir="left" size={5} /></ToolButton>
    <ToolButton aria-label="buscar"><Icon name="binoc" /></ToolButton>
    <User><Icon name="user" />MCalza<Caret size={3} /></User>
    <ToolButton $w={20} aria-label="tienda"><Icon name="cart" /></ToolButton>
    <ToolButton $w={22} aria-label="ayuda"><Icon name="help" size={11} /><Caret size={3} /></ToolButton>
    <ToolButton $w={42} $end aria-label="minimizar">
      <Svg width="8" height="8" viewBox="0 0 8 8"><path d="M1 6h5" stroke="#222" strokeWidth="1.500" /></Svg>
    </ToolButton>
    <ToolButton $w={16} aria-label="maximizar">
      <Svg width="8" height="8" viewBox="0 0 8 8"><path d="M1 1h6v6H1z" fill="none" stroke="#333" /></Svg>
    </ToolButton>
    <ToolButton $w={12} aria-label="cerrar"><Cross size={7} /></ToolButton>
  </TitleBar>
);

const SmallTool = ({ name, menu }) => (
  <ToolButton $w={menu ? 18 : 14} aria-label={name}>
    <Icon name={name} />
    {menu && <Caret size={3} />}
  </ToolButton>
);

const RibbonArea = () => (
  <Ribbon>
    <Panel $w={47}>
      <PanelBody><BigButton $on><Icon name="cursor" size={19} />Modificar</BigButton></PanelBody>
      <PanelName>Seleccionar <Caret /></PanelName>
    </Panel>
    <Panel $w={41}>
      <PanelBody>
        <Stack>
          <BigButton $w={21} aria-label="Tipo de familia"><Icon name="palettes" size={17} /></BigButton>
          <BigButton $w={21} $on aria-label="Propiedades"><Icon name="props" size={17} /></BigButton>
        </Stack>
      </PanelBody>
      <PanelName>Propiedades</PanelName>
    </Panel>
    <Panel $w={45}>
      <PanelBody $gap={3}>
        <BigButton $w={24} $off><Icon name="paste" size={19} />Pegar<Caret size={3} /></BigButton>
        <SmallGrid><SmallTool name="cut" /><SmallTool name="copy" /><SmallTool name="match" /></SmallGrid>
      </PanelBody>
      <PanelName>Portapapeles</PanelName>
    </Panel>
    <Panel $w={82}>
      <PanelBody>
        <SmallGrid $w={44}>
          <TextTool><Icon name="cope" />Recorte <Caret size={3} /></TextTool>
          <TextTool><Icon name="cutGeo" />Cortar <Caret size={3} /></TextTool>
          <TextTool><Icon name="join" />Unir <Caret size={3} /></TextTool>
        </SmallGrid>
        <SmallGrid><SmallTool name="wall" /><SmallTool name="align2" /><SmallTool name="paint" /></SmallGrid>
        <SmallGrid $w={18}><SmallTool name="split" /><SmallTool name="unjoin" menu /><SmallTool name="hammer" /></SmallGrid>
      </PanelBody>
      <PanelName>Geometría</PanelName>
    </Panel>
    <Panel $w={131}>
      <PanelBody $start>
        <BigGrid $cols={4}>
          {['alignBig', 'offset', 'mirror', 'mirrorDraw', 'move', 'copyBig', 'rotate', 'trim'].map((n) => (
            <button key={n} aria-label={n}><Icon name={n} size={17} /></button>
          ))}
        </BigGrid>
        <SmallGrid $cols={3}>
          {['splitEl', 'splitEl', 'unpin', 'array', 'scale', 'pin', 'trimOne', 'trimMulti', 'delete'].map((n, i) => (
            <SmallTool key={i} name={n} />
          ))}
        </SmallGrid>
      </PanelBody>
      <PanelName>Modificar</PanelName>
    </Panel>
    <Panel $w={35}>
      <PanelBody $start>
        <SmallGrid $cols={2} $w={18}>
          <SmallTool name="bulb" menu /><SmallTool name="override" />
          <SmallTool name="brush" menu /><SmallTool name="linework" />
          <SmallTool name="section" />
        </SmallGrid>
      </PanelBody>
      <PanelName>Vista</PanelName>
    </Panel>
    <Panel $w={44}>
      <PanelBody>
        <BigGrid $cols={2} $w={21}>
          {['group', 'similar', 'assembly', 'parts'].map((n) => (
            <button key={n} aria-label={n}><Icon name={n} size={18} /></button>
          ))}
        </BigGrid>
      </PanelBody>
      <PanelName>Crear</PanelName>
    </Panel>
    <Panel $w={31}>
      <PanelBody>
        <BigGrid $cols={1} $w={28}>
          <Row $gap={4}><button aria-label="Cota"><Icon name="dimGrey" size={17} /></button><Caret size={3} /></Row>
          <Row $gap={4}><button aria-label="Medir"><Icon name="measure" size={17} /></button><Caret size={3} /></Row>
        </BigGrid>
      </PanelBody>
      <PanelName>Medir</PanelName>
    </Panel>
    <Panel $w={26}>
      <PanelBody><BigButton $w={23}><Icon name="family" size={19} />Editar<br />familia</BigButton></PanelBody>
      <PanelName $context>Modo</PanelName>
    </Panel>
    <Panel $w={73}>
      <PanelBody>
        <BigButton $w={41} $off><Icon name="hosts" size={19} />Anfitriones<br />relacionados</BigButton>
        <BigButton $off><Icon name="floors" size={19} />Suelos de<br />masa</BigButton>
      </PanelBody>
      <PanelName $context>Modelo</PanelName>
    </Panel>
    <Panel $w={97}>
      <PanelBody>
        <BigButton $w={54}><Icon name="plane" size={19} />Editar<br />plano de trabajo</BigButton>
        <Divider />
        <BigButton $w={42}><Icon name="pick" size={19} />Seleccionar<br />nuevo</BigButton>
      </PanelBody>
      <PanelName $context>Plano de trabajo</PanelName>
    </Panel>
    <Panel $w={64}>
      <PanelBody>
        <PlacementList>
          <Placement $on><Icon name="face" size={9} />Cara</Placement>
          <Placement><Icon name="workplane" size={9} />Plano de trabajo</Placement>
        </PlacementList>
      </PanelBody>
      <PanelName $context>Colocación</PanelName>
    </Panel>
    <ContextFill />
  </Ribbon>
);

const Value = ({ id, name, value, muted }) => {
  const [checked, setChecked] = useState(true);
  const edit = name === 'Desfase desde el anfitrión';
  return (
    <Cell $muted={muted} $edit={edit}>
      {value === 'check'
        ? <Tick id={id} type="checkbox" checked={checked} onChange={() => setChecked(!checked)} />
        : <input id={id} type="text" defaultValue={value} readOnly={muted} />}
    </Cell>
  );
};

const Properties = () => (
  <Palette>
    <PaletteBox>
      <PaletteHead>Propiedades<button aria-label="Cerrar"><Cross /></button></PaletteHead>
      <TypePicker>
        <Thumb viewBox="0 0 36 36">
          <path d="M0 4l36 20v11L0 15z" fill="#4c4c4c" />
          <path d="M1 3v13M12 9v13M24 16v13M35 23v13" stroke="#111" strokeWidth="1.500" />
          <path d="M4 6v11M7 8v11M16 12v12M20 15v12M28 19v12M32 21v12" stroke="#2a2a2a" />
        </Thumb>
        Cierre Mallazo Metalico
        <Spacer />
        <Caret />
      </TypePicker>
      <FilterRow>
        <SelectBox $w={144}>
          <select aria-label="Filtro de propiedades"><option>Modelos genéricos (1)</option></select>
          <Chevron />
        </SelectBox>
        <TextTool><Icon name="typeEdit" size={9} />Editar tipo</TextTool>
      </FilterRow>
      <TableArea>
        <Table>
          <colgroup><Col $w="50%" /><Col /><Col $w="6px" /></colgroup>
          <tbody>
            {properties.map(({ group, rows }) => (
              <React.Fragment key={group}>
                <tr>
                  <Group colSpan={3}><Row>{group}<button aria-label={`Contraer ${group}`}><Chevron dir="double" color="#222" /></button></Row></Group>
                </tr>
                {rows.map(([name, value, muted]) => {
                  const id = name.replace(/\W+/g, '-');
                  return (
                    <tr key={name}>
                      <Cell $name $muted={muted}><label htmlFor={id}>{name}</label></Cell>
                      <Value id={id} name={name} value={value} muted={muted} />
                      <MoreCell>{(name === 'Copyright' || value === 'check') && <MoreButton aria-label={`Asociar ${name}`} />}</MoreCell>
                    </tr>
                  );
                })}
              </React.Fragment>
            ))}
          </tbody>
        </Table>
      </TableArea>
      <HelpRow><a href="#ayuda">Ayuda de propiedades</a><Apply disabled>Aplicar</Apply></HelpRow>
    </PaletteBox>
    <BottomTabs>
      <BottomTab>Navegador de proyectos - R...</BottomTab>
      <BottomTab $on>Propiedades</BottomTab>
    </BottomTabs>
  </Palette>
);

const View = () => (
  <ViewArea>
    <ViewTabs>
      <ViewTab $w={70}><Icon name="plan" size={8} />Nivel 1</ViewTab>
      <ViewTab $w={72} $on>
        <Icon name="view3d" size={9} />{'{3D}'}<Spacer /><button aria-label="Cerrar vista"><Cross /></button>
      </ViewTab>
      <Spacer />
      <button aria-label="Lista de vistas"><Caret size={5} /></button>
    </ViewTabs>
    <CanvasRow>
      <Canvas>
        <Fence />
        <ViewCube />
        <NavBar>
          <NavDot aria-label="Cerrar barra" />
          <Svg width="14" height="14" viewBox="0 0 14 14"><path d="M7 1h6v6a6 6 0 1 1-6-6z" fill="#eee" stroke="#999" /><circle cx="7" cy="7" r="3.500" fill="#fff" stroke="#999" /></Svg>
          <Caret size={3} />
          <NavLine />
          <Svg width="12" height="14" viewBox="0 0 12 14"><path d="M1 4h5M9 11l2 2" stroke="#888" strokeWidth="1.500" /><circle cx="8" cy="9" r="2.300" fill="none" stroke="#888" /></Svg>
          <Caret size={3} />
          <NavDot aria-label="Opciones de barra" />
        </NavBar>
        <Tooltip role="tooltip">Arrastrar final de componente genérico condicionado por curva</Tooltip>
      </Canvas>
      <VScroll><Chevron dir="up" /><Thumbnail $w={8} /><Chevron /></VScroll>
    </CanvasRow>
    <ViewBar>
      <ScaleButton>1 : 500</ScaleButton>
      <ViewTools>
        {viewTools.map((name) => <button key={name} aria-label={name}><Icon name={name} size={10} /></button>)}
      </ViewTools>
      <HScroll><Chevron dir="left" /><Thumbnail $w={9} /><Chevron dir="right" /></HScroll>
    </ViewBar>
  </ViewArea>
);

const Footer = () => (
  <>
    <OptionsBar>
      <OptionsName>Modificar | Modelos genéricos</OptionsName>
      <Grip />
      <Row $gap={2}>
        <Tick id="mueve" type="checkbox" />
        <label htmlFor="mueve">Se mueve con elementos cercanos</label>
      </Row>
    </OptionsBar>
    <StatusBar>
      <StatusText>Arrastrar final de componente genérico condicionado por curva</StatusText>
      <ToolButton $w={16} aria-label="Subproyectos"><Icon name="worksets" /></ToolButton>
      <SelectBox $w={114} $h={10} $plain>
        <select aria-label="Subproyecto activo"><option> </option></select>
        <Chevron color="#aaa" size={5} />
      </SelectBox>
      <ToolButton $w={15} aria-label="Solo editables"><Icon name="filterOff" /></ToolButton>
      <Count $w={16}>:0</Count>
      <ToolButton aria-label="Opciones de diseño"><Icon name="options" /></ToolButton>
      <ToolButton aria-label="Añadir a conjunto"><Icon name="optionsOff" /></ToolButton>
      <SelectBox $w={114} $h={10} $plain>
        <select aria-label="Opción activa"><option>Modelo base</option></select>
        <Chevron color="#aaa" size={5} />
      </SelectBox>
      <Spacer />
      {['selLink', 'selUnder', 'selPin', 'selFace', 'selDrag', 'gear', 'funnel'].map((n) => (
        <ToolButton key={n} aria-label={n}><Icon name={n} /></ToolButton>
      ))}
      <Count $w={53}>:1</Count>
    </StatusBar>
  </>
);

const App = () => (
  <>
    <GlobalStyle />
    <Page>
      <Header />
      <Tabs>
        <Tab $file>Archivo</Tab>
        <TabList>
          {ribbonTabs.map((t) => <Tab key={t}>{t}</Tab>)}
        </TabList>
        <Tab $context>Modificar | Modelos genéricos</Tab>
        <ToolButton $w={38} aria-label="Minimizar cinta"><Icon name="play" /><Caret /></ToolButton>
      </Tabs>
      <RibbonArea />
      <Workspace>
        <Properties />
        <View />
      </Workspace>
      <Footer />
    </Page>
  </>
);

export default App;
